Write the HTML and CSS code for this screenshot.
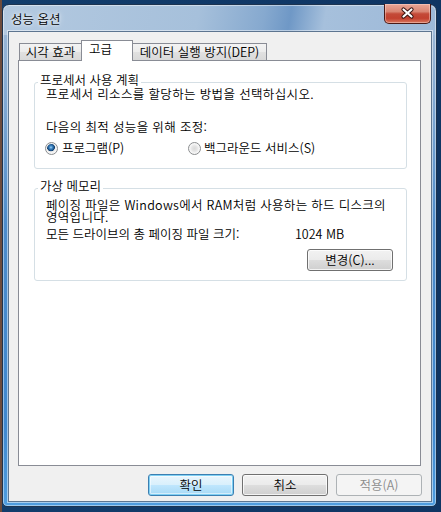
FILE: index.html
```html
<!DOCTYPE html>
<html lang="ko">
<head>
<meta charset="utf-8">
<title>성능 옵션</title>
<link rel="stylesheet" href="styles.css">
</head>
<body>
<div class="window">
  <div class="titlebar">
    <span class="title">성능 옵션</span>
    <div class="close">
      <svg width="47" height="20" viewBox="0 0 47 20">
        <path d="M19.5 6.5 L27.5 13.5 M27.5 6.5 L19.5 13.5" stroke="#3a1410" stroke-width="4.2" stroke-linecap="round" fill="none"/>
        <path d="M19.5 6.5 L27.5 13.5 M27.5 6.5 L19.5 13.5" stroke="#ffffff" stroke-width="2.2" stroke-linecap="round" fill="none"/>
      </svg>
    </div>
  </div>
  <div class="client">
    <div class="tabs">
      <div class="tab t1">시각 효과</div>
      <div class="tab t2 active">고급</div>
      <div class="tab t3">데이터 실행 방지(DEP)</div>
    </div>
    <div class="panel">
      <div class="group g1">
        <div class="group-title">프로세서 사용 계획</div>
        <p class="line first-line">프로세서 리소스를 할당하는 방법을 선택하십시오.</p>
        <p class="line adjust">다음의 최적 성능을 위해 조정:</p>
        <div class="radios">
          <label class="radio first"><span class="dot checked"></span>프로그램(P)</label>
          <label class="radio"><span class="dot"></span>백그라운드 서비스(S)</label>
        </div>
      </div>
      <div class="group g2">
        <div class="group-title">가상 메모리</div>
        <p class="para">페이징 파일은 Windows에서 RAM처럼 사용하는 하드 디스크의<br>영역입니다.</p>
        <div class="size-row"><span class="size-label">모든 드라이브의 총 페이징 파일 크기:</span><span>1024 MB</span></div>
        <div class="change-row"><button class="btn">변경(C)...</button></div>
      </div>
    </div>
    <div class="buttons">
      <button class="btn default">확인</button>
      <button class="btn">취소</button>
      <button class="btn" disabled>적용(A)</button>
    </div>
  </div>
</div>
</body>
</html>
```
FILE: styles.css
```css
html, body {
  margin: 0;
  padding: 0;
}
body {
  width: 441px;
  height: 512px;
  overflow: hidden;
  background: linear-gradient(90deg, #6d4b3c 0, #6d4b3c 2px, #123d6c 2px, #0f3563 100%);
  font-family: "Noto Sans CJK KR", "Noto Sans", sans-serif;
  font-size: 12.5px;
  font-weight: 350;
  color: #000;
}
.window {
  box-sizing: border-box;
  margin: 4px 0 0 2px;
  width: 435px;
  height: 503px;
  border: 1px solid #1d3450;
  border-radius: 7px 7px 5px 5px;
  display: flex;
  flex-direction: column;
  background:
    linear-gradient(100deg, #b3c9e0 0%, #a6c0db 45%, #86a9cf 60%, #6f98c6 66%, #a6c0dc 74%, #9db9d8 100%) top / 100% 30px no-repeat,
    linear-gradient(180deg, #9fbad7 0, #8fb0d4 60px, #4d8ccb 220px, #3f88cf 420px, #4f9ddf 100%);
  box-shadow: inset 0 0 0 1px rgba(255, 255, 255, 0.45);
}
.titlebar {
  height: 26px;
  flex: none;
  display: flex;
  justify-content: space-between;
  align-items: flex-start;
  padding-left: 8px;
}
.title {
  margin-top: 6px;
  line-height: 16px;
  font-size: 12.5px;
  color: #000;
  text-shadow: 0 0 6px rgba(255, 255, 255, 0.9), 0 0 3px rgba(255, 255, 255, 0.8);
}
.close {
  width: 47px;
  height: 20px;
  margin: -1px 5px 0 0;
  box-sizing: border-box;
  border: 1px solid #4a1a16;
  border-top: none;
  border-radius: 0 0 5px 5px;
  background: linear-gradient(180deg, #e9a697 0%, #d98572 40%, #c44a38 52%, #c2412f 75%, #d8775f 100%);
  box-shadow: inset 0 0 0 1px rgba(255, 220, 210, 0.45);
}
.close svg {
  display: block;
  margin: -1px 0 0 -1px;
}
.client {
  flex: 1;
  margin: 0 4px 4px 5px;
  background: #f0f0f0;
  border: 1px solid #5d7590;
  box-shadow: 0 0 0 1px rgba(255, 255, 255, 0.5);
  display: flex;
  flex-direction: column;
  padding: 8px 9px 5px 0;
}
.tabs {
  display: flex;
  align-items: flex-end;
  padding-left: 10px;
  height: 21px;
  flex: none;
}
.tab {
  box-sizing: border-box;
  height: 18px;
  border: 1px solid #898c95;
  background: linear-gradient(180deg, #f3f3f3 0%, #ececec 50%, #e1e1e1 50%, #d9d9d9 100%);
  line-height: 16px;
  text-align: center;
  white-space: nowrap;
}
.tab + .tab {
  margin-left: -1px;
}
.t1 { width: 63px; }
.t2 { width: 52px; }
.t3 { width: 135px; }
.tab.active {
  position: relative;
  z-index: 1;
  height: 21px;
  border-bottom: none;
  background: #fff;
  text-align: left;
  padding-left: 7px;
  line-height: 15px;
}
.panel {
  flex: 1;
  margin: -1px 1px 0 9px;
  background: #fff;
  border: 1px solid #898c95;
  padding: 0 13px 0 15px;
}
.group {
  border: 1px solid #d5dfe5;
  border-radius: 3px;
  padding: 0 13px 0 11px;
}
.g1 {
  margin-top: 21px;
  padding-bottom: 12px;
}
.g2 {
  margin-top: 19px;
  padding-bottom: 9px;
}
.group-title {
  width: fit-content;
  margin: -10px 0 0 -8px;
  padding: 0 2px;
  background: #fff;
  line-height: 14px;
}
.line {
  margin: 0;
  line-height: 15px;
  white-space: nowrap;
  letter-spacing: 0.35px;
}
.first-line {
  line-height: 13px;
}
.adjust {
  margin-top: 19px;
}
.radios {
  display: flex;
  margin: 6px 0 0 -1px;
  height: 16px;
  align-items: center;
}
.radio {
  display: flex;
  align-items: center;
  line-height: 16px;
  white-space: nowrap;
}
.radio.first {
  width: 143px;
}
.dot {
  box-sizing: border-box;
  width: 13px;
  height: 13px;
  margin-right: 3px;
  border-radius: 50%;
  border: 1px solid #8b8d8f;
  background: radial-gradient(circle at 50% 50%, #dadada 0, #e4e4e4 2.5px, #f4f4f4 4.5px, #ffffff 5.5px);
  box-shadow: inset 0 0 0 1px #f6f6f6;
}
.radio.first .dot {
  margin-right: 4px;
}
.dot.checked {
  background: radial-gradient(circle at 45% 40%, #a9dbf9 0, #4a90cc 1.3px, #1b568f 3px, #0f3a66 3.6px, #eaeaea 4.2px, #f5f5f5 5.5px);
}
.para {
  margin: 6px 0 0;
  line-height: 12px;
  white-space: nowrap;
  letter-spacing: 0.3px;
}
.size-row {
  display: flex;
  margin-top: 3px;
  line-height: 15px;
  white-space: nowrap;
}
.size-label {
  width: 249px;
}
.change-row {
  display: flex;
  justify-content: flex-end;
  margin-top: 8px;
}
.btn {
  box-sizing: border-box;
  width: 86px;
  height: 22px;
  padding: 0;
  border: 1px solid #707070;
  border-radius: 3px;
  background: linear-gradient(180deg, #f2f2f2 0%, #ebebeb 48%, #dddddd 52%, #cfcfcf 100%);
  box-shadow: inset 0 0 0 1px rgba(255, 255, 255, 0.75);
  font-family: inherit;
  font-weight: inherit;
  font-size: 12.5px;
  line-height: 18px;
  color: #000;
}
.btn.default {
  border-color: #3c7fb1;
  background: linear-gradient(180deg, #eaf6fd 0%, #d9f0fc 48%, #bee6fd 52%, #a7d9f5 100%);
  box-shadow: inset 0 0 0 1px #7fd0f4, inset 0 0 0 2px rgba(255, 255, 255, 0.5);
}
.btn:disabled {
  border-color: #adb2b5;
  background: #f4f4f4;
  box-shadow: none;
  color: #8b8b8b;
}
.buttons {
  flex: none;
  display: flex;
  justify-content: flex-end;
  gap: 8px;
  margin-top: 8px;
}
```
